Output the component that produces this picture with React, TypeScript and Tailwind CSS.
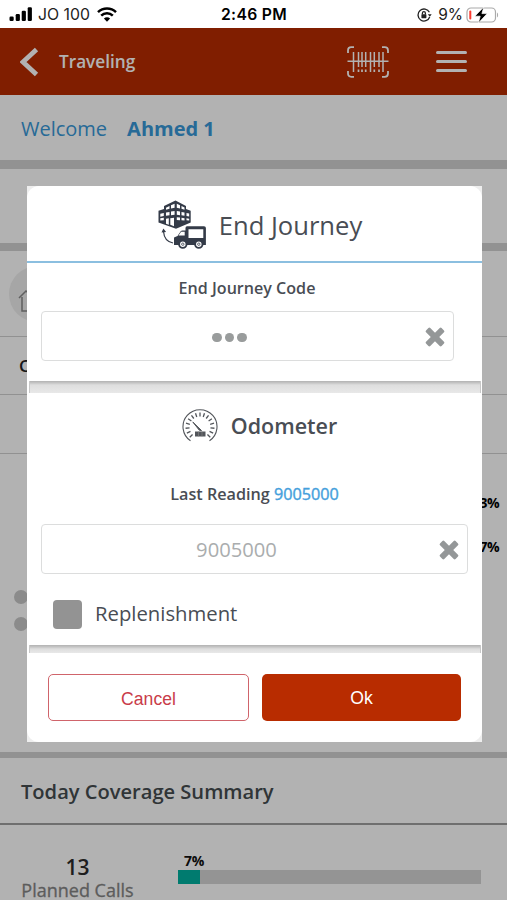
import type {ReactNode} from "react";

function StatusBar() {
  return (
    <div className="flex h-7 shrink-0 items-center bg-white font-['Inter',sans-serif] text-black">
      <div className="flex flex-1 items-center pl-[9px] pt-px">
        <svg width="24" height="15" viewBox="0 0 24 15" className="shrink-0">
          <rect x="0.5" y="9.5" width="4.2" height="4.5" rx="1.2" />
          <rect x="6.7" y="7" width="4.2" height="7" rx="1.2" />
          <rect x="12.7" y="3.8" width="4.2" height="10.2" rx="1.2" />
          <rect x="18.7" y="0.3" width="4.2" height="13.7" rx="1.2" />
        </svg>
        <span className="ml-[5px] pt-px text-[15.8px] whitespace-nowrap text-[#222]">JO 100</span>
        <svg width="20" height="15" viewBox="0 0 20 15" className="ml-[7px] shrink-0" fill="none" stroke="#000" strokeWidth="2.5">
          <path d="M1 5.2a13 13 0 0 1 18 0" />
          <path d="M4.2 8.7a8.3 8.3 0 0 1 11.6 0" />
          <path d="M10 14.8 6.9 11.6a4.4 4.4 0 0 1 6.2 0Z" fill="#000" stroke="none" />
        </svg>
      </div>
      <span className="pt-[2px] text-[15.7px] font-semibold tracking-[0.3px]">2:46 PM</span>
      <div className="flex flex-1 items-center justify-end pr-[8px] pt-px">
        <svg width="15" height="14" viewBox="0 0 15 14" fill="none" stroke="#222" strokeWidth="1.3">
          <path d="M12.4 4.3A6 6 0 1 0 12.7 9" />
          <path d="M10.8 6.2h3.9l-1.9 2.6Z" fill="#222" stroke="none" />
          <rect x="4.4" y="6.3" width="5" height="3.9" rx="0.6" fill="#222" stroke="none" />
          <path d="M5.4 6.5V5.2a1.5 1.5 0 0 1 3 0v1.3" />
        </svg>
        <span className="ml-[6px] pt-px text-[15.5px] text-[#222]">9%</span>
        <svg width="34" height="18" viewBox="0 0 34 18" className="ml-[2px]">
          <rect x="2" y="2" width="28.5" height="14" rx="4" fill="none" stroke="#aaa" strokeWidth="1.2" />
          <path d="M32 6.5c1.5.8 1.5 4.200 0 5Z" fill="#aaa" />
          <rect x="4.3" y="4.5" width="2" height="9" rx="1" fill="#fb3b30" />
          <path d="M18.8 1 9.8 10.2h5.4L13.4 17l8.8-9.4h-5.3Z" fill="#000" stroke="#fff" strokeWidth="0.7" />
        </svg>
      </div>
    </div>
  );
}

function BarcodeIcon() {
  return (
    <svg width="42" height="32" viewBox="0 0 42 32" fill="none" stroke="#fff" strokeWidth="1.8">
      <path d="M1 7V4.500Q1 1.200 4.300 1.200H7M35 1.200h2.700Q41 1.200 41 4.500V7M41 25v2.500q0 3.300-3.300 3.300H35M7 30.800H4.300Q1 30.800 1 27.500V25" />
      <path d="M0.5 15.2h41" strokeWidth="1.5" />
      <path d="M6.5 6v20M23.5 6v20M36 6v20M11.5 6v15M15 6v15M18.7 6v15M27.3 6v15M32 6v15" strokeWidth="1.5" />
      <path d="M11.5 23.5V26M15 23.5V26M18.7 23.5V26M27.3 23.5V26M32 23.5V26" strokeWidth="1.7" />
    </svg>
  );
}

function JourneyIcon() {
  return (
    <svg width="49" height="49" viewBox="0 0 49 49" fill="none" stroke="#343b48">
      <path d="M.5 10.800 6 9V6L17.500.5 28 6v3l4.700 1.800V22.500L18 28.800.5 22.500Z" fill="#343b48" stroke="none" />
      <g fill="#fff" stroke="none">
        <path d="M8 7.8 11.500 6v2.700L8 9.700ZM13 5.300l3.600-1.600v4L13 8.500ZM18.800 3.700l3.200 1.600v3.200l-3.200-.8ZM23.500 6l3 1.500v2.200l-3-.9Z" />
        <path d="M2.300 13.800 5.800 13v3l-3.500.7ZM8 12.600l3.500-.7V15.200L8 15.800ZM13 11.600l3.600-.7v3.800l-3.600.5ZM18.800 10.900l3.200.7v3.600l-3.200-.5ZM23.500 12l3 .6v3.200l-3-.6ZM28.500 13l2.700.6v3l-2.700-.6Z" />
        <path d="M2.300 18.300 5.800 17.800v2.400l-3.500.2ZM8 18.800l2.800-.5v6.400L8 23.800ZM12.300 18.200l3.700-.4v8.500l-3.700-1.500ZM18.800 17.200l3.200.4v2.700l-3.200-.2ZM23.500 17.800l3 .4v2.200l-3-.2ZM28.500 18.300l2.700.4v1.800l-2.700-.2Z" />
      </g>
      <path d="M5.5 31.5C6 38 9.5 42 15 43" strokeWidth="1.2" />
      <path d="m3.500 32.500 1.900-4 2.700 3.600Z" fill="#343b48" stroke="none" />
      <path d="M16 45v-7.500l3.500-1.500 3-4.500q.8-1 2-1h3V28q0-1.800 1.500-1.800h17q1.900 0 1.900 1.900V45Z" fill="#343b48" stroke="none" />
      <path d="M30.500 29.300h14.800v8.700H30.500ZM20.500 35.500l2.600-3.800h3.600v3.800Z" fill="#fff" stroke="none" />
      <circle cx="24.8" cy="44.2" r="3.7" fill="#fff" strokeWidth="1.9" />
      <circle cx="40.8" cy="44.2" r="3.7" fill="#fff" strokeWidth="1.9" />
      <circle cx="24.8" cy="44.2" r="1.2" strokeWidth="0.8" />
      <circle cx="40.8" cy="44.2" r="1.2" strokeWidth="0.8" />
    </svg>
  );
}

function GaugeIcon() {
  const ticks = [-135, -115, -95, -75, -55, -36, -18, 0, 18, 36, 55, 75, 95, 115, 135];
  return (
    <svg width="36" height="34" viewBox="0 0 36 34" fill="none" stroke="#53565b">
      <path d="M8.5 31.8A17 17 0 1 1 27.5 31.8" strokeWidth="1.1" />
      {ticks.map((angle) => (
        <path key={angle} d="M18 3.5v4" strokeWidth="1.3" transform={`rotate(${angle} 18 18)`} />
      ))}
      <path d="m10.8 13 8.700 8.500-2.200-.3Z" fill="#53565b" strokeWidth="1" />
      <rect x="13" y="22.5" width="10.5" height="5" fill="#53565b" stroke="none" />
      <path d="M16.5 22.5v5M20 22.5v5" stroke="#888" strokeWidth="0.6" />
    </svg>
  );
}

function ClearIcon() {
  return (
    <svg width="20" height="20" viewBox="0 0 20 20" fill="#949798" className="relative top-px">
      <rect x="-1" y="7" width="22" height="6" rx="1.3" transform="rotate(45 10 10)" />
      <rect x="-1" y="7" width="22" height="6" rx="1.3" transform="rotate(-45 10 10)" />
    </svg>
  );
}

function Field({className, children}: {className: string; children: ReactNode}) {
  return (
    <div className={`flex h-[50px] items-center rounded-[4px] border-[1.5px] border-[#dcdddd] bg-white pr-2 ${className}`}>
      <div className="flex flex-1 justify-center pr-[8px]">{children}</div>
      <ClearIcon />
    </div>
  );
}

function Page() {
  return (
    <div className="flex flex-1 flex-col bg-white text-[#454c50]">
      <header className="flex h-[67px] shrink-0 items-center bg-[#b82c00] pl-5 pr-10 text-white">
        <svg width="19" height="30" viewBox="0 0 19 30" fill="none" stroke="#fff" strokeWidth="4.8">
          <path d="M16.5 2.5 3 15l13.5 12.5" />
        </svg>
        <h1 className="ml-5 flex-1 text-[17.2px] font-semibold">Traveling</h1>
        <BarcodeIcon />
        <div className="ml-[47px] flex w-[31px] flex-col gap-[6px]">
          <span className="h-[3.3px] rounded-full bg-white" />
          <span className="h-[3.3px] rounded-full bg-white" />
          <span className="h-[3.3px] rounded-full bg-white" />
        </div>
      </header>
      <div className="flex h-[65px] shrink-0 items-center gap-5 pl-[21px] pt-0.5 text-[20px] text-[#3898d8]">
        <span>Welcome</span>
        <span className="font-bold">Ahmed 1</span>
      </div>
      <div className="h-[9px] shrink-0 bg-[#d2d2d2]" />
      <div className="h-[74px] shrink-0" />
      <div className="h-[8px] shrink-0 bg-[#d2d2d2]" />
      <div className="flex h-[86px] shrink-0 items-center border-b-[1.5px] border-[#d0d0d0] pl-[9px]">
        <div className="flex size-[56px] items-center justify-center rounded-full bg-[#eeeeee]">
          <svg width="38" height="24" viewBox="0 0 38 24" fill="none" stroke="#888" strokeWidth="1.5" className="relative top-[7px]">
            <path d="M1 9 8 2l8 7M4 8v14h28V8" />
          </svg>
        </div>
      </div>
      <div className="flex h-[58px] shrink-0 items-center border-b-[1.5px] border-[#d0d0d0] pl-[19px] text-[17px] font-semibold text-[#222]">C</div>
      <div className="h-[59px] shrink-0 border-b-[1.5px] border-[#d0d0d0]" />
      <div className="flex h-[298px] shrink-0 justify-between pl-[14px] pr-[8px] text-[14px] font-bold text-black">
        <div className="flex flex-col gap-[13px] pt-[136px]">
          <span className="size-[14px] rounded-full bg-[#c8c8c8]" />
          <span className="size-[14px] rounded-full bg-[#c8c8c8]" />
        </div>
        <div className="flex flex-col gap-6 pt-[39px] leading-5 tracking-[-0.5px]">
          <span>3%</span>
          <span>7%</span>
        </div>
      </div>
      <div className="h-[6px] shrink-0 bg-[#d2d2d2]" />
      <h2 className="flex h-[67px] shrink-0 items-center border-b-2 border-[#a0a0a0] pl-[21px] pt-[3px] text-[20.1px] font-semibold">
        Today Coverage Summary
      </h2>
      <div className="flex shrink-0 pt-[27px]">
        <div className="w-[155px] text-center">
          <div className="pt-px text-[21px] leading-[28px] font-semibold text-[#2c2c2c]">13</div>
          <div className="text-[18px] leading-[18px] whitespace-nowrap text-[#858585] [-webkit-text-stroke:0.3px]">Planned Calls</div>
        </div>
        <div className="ml-[23px] w-[303px]">
          <div className="pl-[6px] text-[14px] leading-[18px] font-bold tracking-[-0.3px] text-[#111]">7%</div>
          <div className="h-[14px] bg-[#d5d5d5]">
            <div className="h-full w-[22px] bg-[#00b1a0]" />
          </div>
        </div>
      </div>
    </div>
  );
}

function Divider({className}: {className: string}) {
  return (
    <div
      className={`mx-[1.5px] shrink-0 border-x border-x-[#c8c8c8] bg-[linear-gradient(#b2b2b2_0px,#c6c6c6_2px,#dedede_4px,#e8e8e8_100%)] ${className}`}
    />
  );
}

function EndJourneyDialog() {
  return (
    <div className="absolute left-[27px] top-[186px] h-[556px] w-[455px] bg-[#eeeeee]">
      <div className="flex h-full flex-col rounded-[12px] bg-white text-[#494d54]">
        <div className="flex h-[77px] shrink-0 items-center justify-center border-b-2 border-[#8bbfe0] pl-[15px] pt-[2px]">
          <JourneyIcon />
          <h2 className="ml-3 pr-[4px] pt-[3px] text-[25.6px] whitespace-nowrap">End Journey</h2>
        </div>
        <div className="h-[118px] shrink-0 pt-[12px]">
          <div className="pr-[15px] text-center text-[16.1px] leading-[26px] font-semibold">End Journey Code</div>
          <Field className="ml-[14px] mt-[10px] w-[413px]">
            <div className="flex gap-[3px] pt-[3px]">
              <span className="size-[9.5px] rounded-full bg-[#999c9c]" />
              <span className="size-[9.5px] rounded-full bg-[#999c9c]" />
              <span className="size-[9.5px] rounded-full bg-[#999c9c]" />
            </div>
          </Field>
        </div>
        <Divider className="h-[12px]" />
        <div className="h-[252px] shrink-0 pt-[16px]">
          <div className="flex h-[34px] items-center justify-center gap-[13px] pl-[10px]">
            <GaugeIcon />
            <span className="text-[21.5px] font-semibold">Odometer</span>
          </div>
          <div className="mt-[38px] text-center text-[16.2px] leading-[26px] font-semibold">
            Last Reading <span className="font-normal text-[#45a0dc] [-webkit-text-stroke:0.4px]">9005000</span>
          </div>
          <Field className="ml-[14px] mt-[17px] w-[427px]">
            <span className="text-[20.2px] text-[#aaadae]">9005000</span>
          </Field>
          <div className="mt-[25px] flex items-center gap-[13px] pl-[26px]">
            <span className="size-[29px] rounded-[4px] bg-[#939393]" />
            <span className="pb-0.5 text-[20.3px] leading-7">Replenishment</span>
          </div>
        </div>
        <Divider className="h-[8px]" />
        <div className="flex gap-[13px] pl-[21px] pt-[21px] font-['Liberation_Sans',sans-serif] text-[17.6px]">
          <button className="h-[47px] w-[201px] rounded-[5px] border-[1.5px] border-[#d0646b] pt-[3px] text-[#c93c49]">Cancel</button>
          <button className="h-[47px] w-[199px] rounded-[5px] bg-[#b82c00] pt-px text-white">Ok</button>
        </div>
      </div>
    </div>
  );
}

export default function App() {
  return (
    <div className="relative flex h-[900px] w-[507px] flex-col overflow-hidden bg-white font-['Open_Sans',sans-serif]">
      <StatusBar />
      <div className="relative flex flex-1 flex-col overflow-hidden">
        <Page />
        <div className="absolute inset-0 bg-black/30" />
      </div>
      <EndJourneyDialog />
    </div>
  );
}
